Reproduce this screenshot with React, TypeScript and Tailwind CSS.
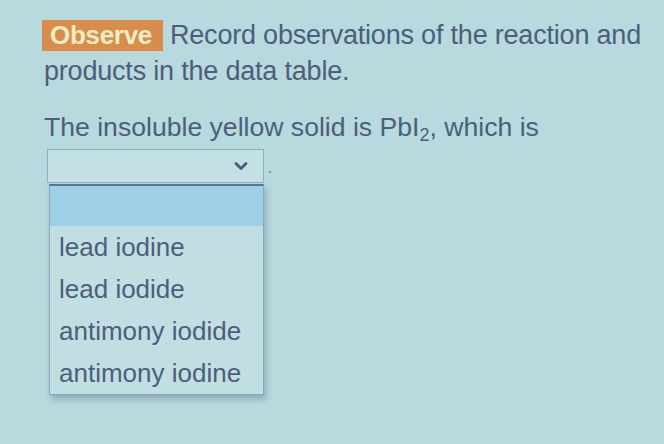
import { ChevronDown } from 'lucide-react';

const options = ['lead iodine', 'lead iodide', 'antimony iodide', 'antimony iodine'];

export default function App() {
  return (
    <div
      className="h-[444px] w-[664px] overflow-hidden bg-[#b8d9dd] text-[#4d5e7c]"
      style={{ fontFamily: '"Liberation Sans", Arial, sans-serif' }}
    >
      <div className="pl-[44px] pr-2 pt-[18px]">
        <p className="whitespace-nowrap text-[27px] leading-[34px] tracking-[-0.2px]">
          <span className="-ml-[2px] mr-[7px] inline-block bg-[#d98d4c] pl-[8px] pr-[11px] text-[26px] font-bold leading-[31px] tracking-[-0.3px] text-[#f2ecc4]">
            Observe
          </span>
          Record observations of the reaction and
          <br />
          <span className="relative top-[2px]">products in the data table.</span>
        </p>

        <p className="mt-[25px] whitespace-nowrap text-[26.6px] leading-[33px]">
          The insoluble yellow solid is PbI<sub className="text-[18px]">2</sub>, which is
        </p>

        <div className="mt-[5px] flex items-end">
          <div className="relative ml-[3px] w-[217px]">
            <div className="flex h-[34px] items-center justify-end border border-[#97adbf] bg-[#c3e1e5] pr-[12px]">
              <ChevronDown className="h-[20px] w-[20px] text-[#4a5e7e]" strokeWidth={3.5} />
            </div>
            <div className="absolute left-[2px] top-[35px] w-[215px] border border-[#8ea4ba] border-t-2 border-t-[#58759c] bg-[#c1dfe2] shadow-[2px_4px_6px_rgba(60,90,110,0.35)]">
              <div className="h-[40px] bg-[#9dd0e4]" />
              {options.map((o) => (
                <div key={o} className="flex h-[42px] items-center pl-[9px] text-[26px]">
                  {o}
                </div>
              ))}
            </div>
          </div>
          <span className="mb-[4px] ml-[4px] text-[14px]">.</span>
        </div>
      </div>
    </div>
  );
}
